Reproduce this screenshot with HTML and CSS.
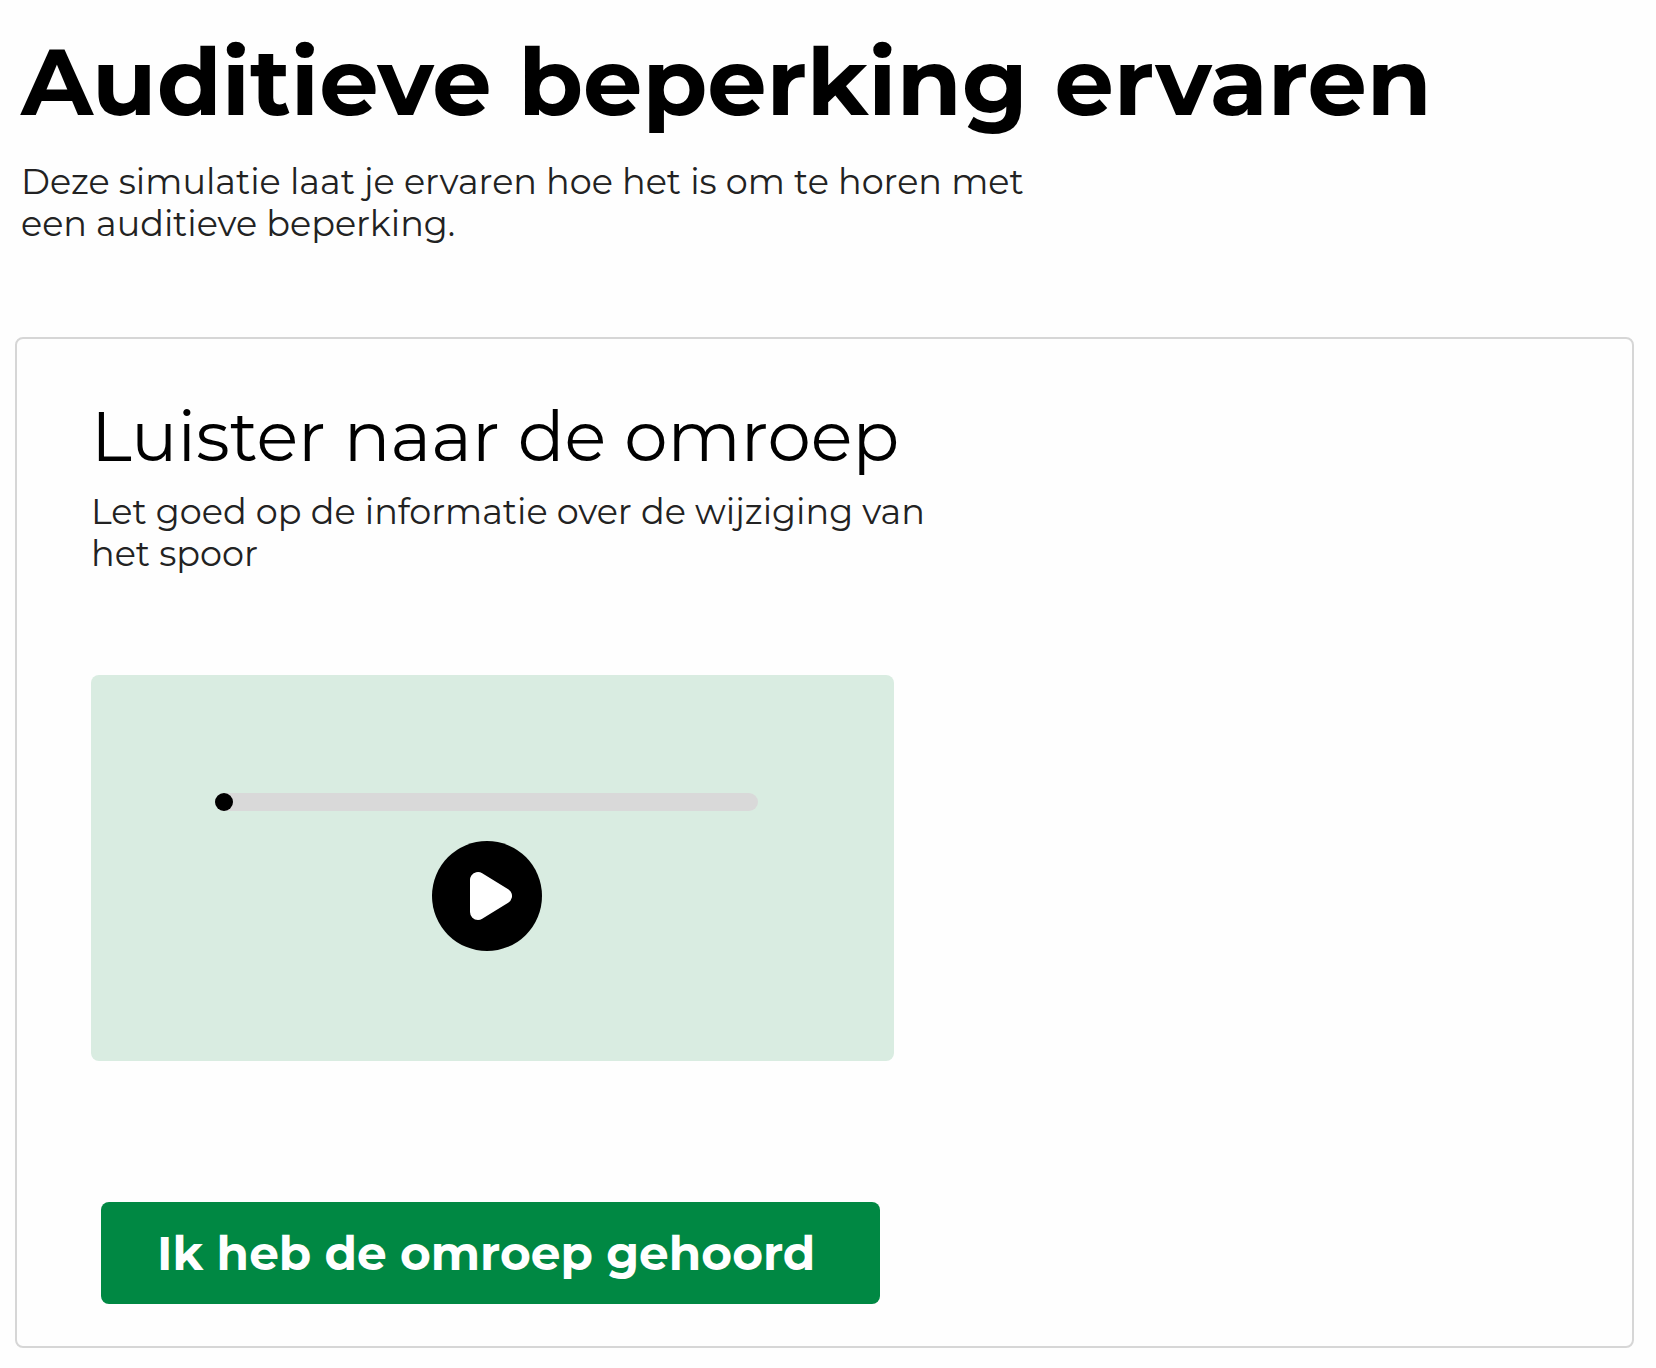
FILE: index.html
```html
<!DOCTYPE html>
<html lang="nl">
<head>
  <meta charset="utf-8">
  <meta name="viewport" content="width=device-width, initial-scale=1">
  <title>Auditieve beperking ervaren</title>
  <link rel="stylesheet" href="styles.css">
</head>
<body>
  <main class="page">
    <header class="intro">
      <h1 class="title">Auditieve beperking ervaren</h1>
      <p class="text intro-text">Deze simulatie laat je ervaren hoe het is om te horen met een auditieve beperking.</p>
    </header>
    <section class="card" aria-labelledby="task-title">
      <h2 class="subtitle" id="task-title">Luister naar de omroep</h2>
      <p class="text task-text">Let goed op de informatie over de wijziging van het spoor</p>
      <div class="player">
        <input class="seek" type="range" min="0" max="100" value="0" aria-label="Positie in de omroep">
        <button class="play" type="button" aria-label="Afspelen">
          <svg class="play-icon" viewBox="0 0 110 110" aria-hidden="true">
            <path d="M46 39v32l26-16z" fill="#fff" stroke="#fff" stroke-width="16" stroke-linejoin="round"/>
          </svg>
        </button>
      </div>
      <button class="confirm" type="button">Ik heb de omroep gehoord</button>
    </section>
  </main>
</body>
</html>
```
FILE: styles.css
```css
* {
  box-sizing: border-box;
}

body {
  margin: 0;
  background: #fefefe;
  color: #000;
  font-family: "Montserrat", "Inter", sans-serif;
}

.page {
  padding: 32px 22px 18px 15px;
}

.intro {
  padding: 0 6px;
}

.title {
  margin: 0;
  font-size: 94px;
  line-height: 100px;
  font-weight: 700;
}

.text {
  margin: 0;
  color: #222;
  font-size: 35px;
  line-height: 42px;
  font-weight: 400;
}

.intro-text {
  max-width: 1020px;
  margin-top: 29px;
}

.card {
  margin-top: 92px;
  padding: 57px 74px 42px;
  border: 2px solid #d6d6d6;
  border-radius: 8px;
}

.subtitle {
  margin: 0;
  font-size: 69px;
  line-height: 80px;
  font-weight: 400;
}

.task-text {
  max-width: 860px;
  margin-top: 15px;
}

.player {
  display: flex;
  flex-direction: column;
  align-items: center;
  gap: 30px;
  max-width: 803px;
  margin-top: 100px;
  padding: 118px 136px 110px 124px;
  border-radius: 8px;
  background: #d9ece1;
}

.seek {
  appearance: none;
  width: 100%;
  height: 18px;
  margin: 0;
  border-radius: 9px;
  background: #d9d9d9;
}

.seek::-webkit-slider-thumb {
  appearance: none;
  width: 18px;
  height: 18px;
  border-radius: 50%;
  background: #000;
}

.play {
  width: 110px;
  height: 110px;
  padding: 0;
  border: 0;
  border-radius: 50%;
  background: #000;
}

.play-icon {
  display: block;
  width: 100%;
}

.confirm {
  width: 100%;
  max-width: 779px;
  margin: 141px 10px 0;
  padding: 25px 56px 23px;
  border: 0;
  border-radius: 8px;
  background: #008843;
  color: #fff;
  font-family: inherit;
  font-size: 47px;
  line-height: 54px;
  font-weight: 700;
  text-align: left;
}
```
